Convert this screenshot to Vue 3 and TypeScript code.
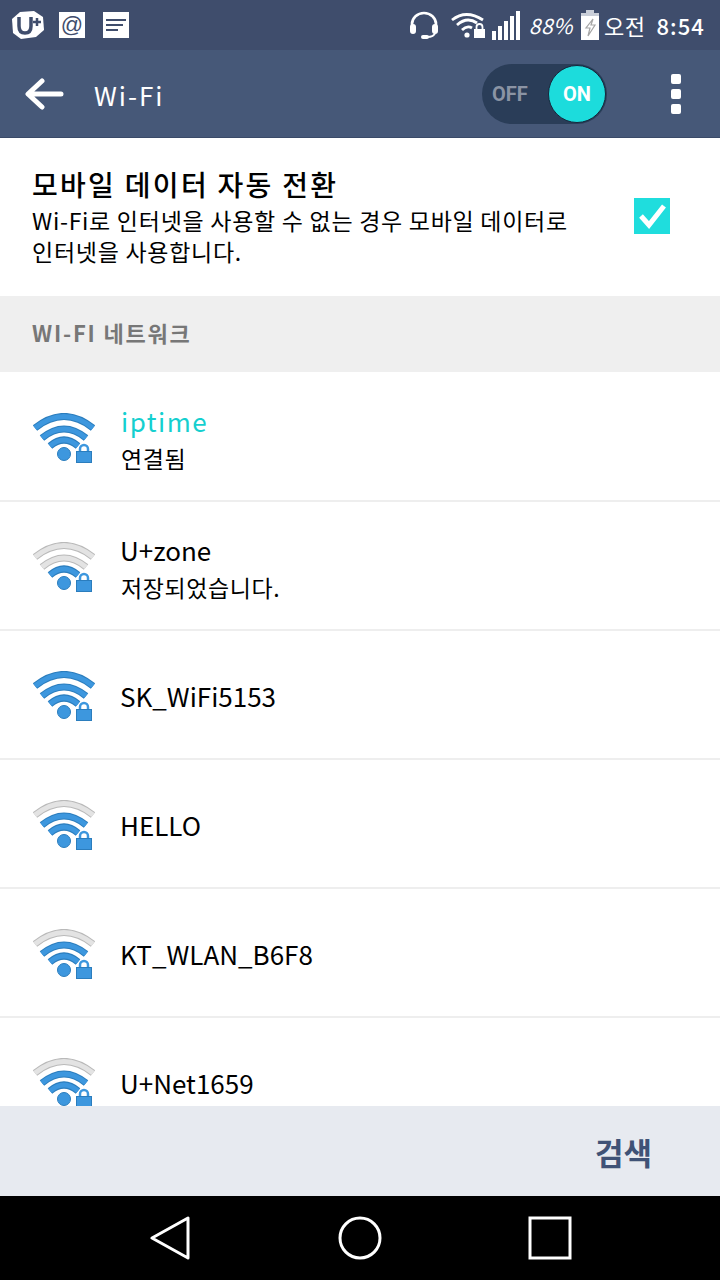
<script setup lang="ts">
interface Network {
  name: string
  sub?: string
  level: number
  active?: boolean
}

const networks: Network[] = [
  { name: 'iptime', sub: '연결됨', level: 3, active: true },
  { name: 'U+zone', sub: '저장되었습니다.', level: 1 },
  { name: 'SK_WiFi5153', level: 3 },
  { name: 'HELLO', level: 2 },
  { name: 'KT_WLAN_B6F8', level: 2 },
  { name: 'U+Net1659', level: 2 },
]
</script>

<template>
  <div class="phone">
    <header class="status">
      <svg class="s-logo" viewBox="0 0 32 28">
        <path d="M8 1 L22 0 L31 6 L32 19 L24 26 L9 28 L1 22 L0 8 Z" fill="#fff" />
        <path d="M7 6 V15 Q7 22 13 22 Q19 22 19 15 V6" fill="none" stroke="#3f4d6c" stroke-width="3.5" />
        <path d="M25 7 V15 M21 11 H29" stroke="#3f4d6c" stroke-width="2.5" />
      </svg>
      <div class="s-box s-at">@</div>
      <svg class="s-note" viewBox="0 0 26 26">
        <rect width="26" height="26" fill="#fff" />
        <path d="M3 8 H23 M3 13 H20 M3 18 H15" stroke="#3f4d6c" stroke-width="2" />
      </svg>
      <div class="spacer"></div>
      <svg class="s-head" viewBox="0 0 30 28">
        <path d="M3 17 V13 A12 11 0 0 1 27 13 V17" fill="none" stroke="#fff" stroke-width="2.6" />
        <rect x="1" y="13" width="6" height="10" rx="3" fill="#fff" />
        <rect x="23" y="13" width="6" height="10" rx="3" fill="#fff" />
        <path d="M26 22 Q25 26 18 26" fill="none" stroke="#fff" stroke-width="2" />
        <rect x="12" y="24" width="8" height="4" rx="2" fill="#fff" />
      </svg>
      <svg class="s-wifi" viewBox="0 0 34 26">
        <path d="M1 8 Q15 -3 32 8" fill="none" stroke="#fff" stroke-width="2.8" />
        <path d="M6 13 Q16 4 26 11" fill="none" stroke="#fff" stroke-width="2.8" />
        <path d="M11 18 Q16 13 21 16" fill="none" stroke="#fff" stroke-width="2.8" />
        <circle cx="16" cy="23" r="2.6" fill="#fff" />
        <rect x="23" y="17" width="11" height="9" fill="#fff" />
        <path d="M25.500 17 V15 A3 3 0 0 1 31.500 15 V17" fill="none" stroke="#fff" stroke-width="1.800" />
      </svg>
      <svg class="s-signal" viewBox="0 0 28 29">
        <rect x="0" y="20" width="4" height="9" fill="#fff" />
        <rect x="6" y="15" width="4" height="14" fill="#fff" />
        <rect x="12" y="10" width="4" height="19" fill="#fff" />
        <rect x="18" y="5" width="4" height="24" fill="#fff" />
        <rect x="24" y="0" width="4" height="29" fill="#fff" />
      </svg>
      <span class="s-pct">88%</span>
      <svg class="s-batt" viewBox="0 0 18 30">
        <rect x="5" y="0" width="8" height="3" fill="#c9ced8" />
        <rect x="0" y="3" width="18" height="27" fill="#fff" />
        <rect x="0" y="3" width="18" height="3" fill="#c9ced8" />
        <path d="M12 9 L5 18 H9 L7 26 L14 15 H10 Z" fill="none" stroke="#a5a5a5" stroke-width="1.200" />
      </svg>
      <span class="s-ampm">오전</span>
      <span class="s-time">8:54</span>
    </header>

    <div class="appbar">
      <svg class="back" viewBox="0 0 40 32">
        <path d="M37 16 H5 M18 3 L4 16 L18 29" fill="none" stroke="#fff" stroke-width="5" stroke-linecap="round" stroke-linejoin="round" />
      </svg>
      <h1 class="title">Wi-Fi</h1>
      <div class="toggle">
        <span class="off">OFF</span>
        <span class="knob">ON</span>
      </div>
      <div class="kebab"><i></i><i></i><i></i></div>
    </div>

    <section class="auto">
      <div class="auto-text">
        <div class="auto-title">모바일 데이터 자동 전환</div>
        <div class="auto-desc">Wi-Fi로 인터넷을 사용할 수 없는 경우 모바일 데이터로<br />인터넷을 사용합니다.</div>
      </div>
      <svg class="check" viewBox="0 0 36 36">
        <rect width="36" height="36" fill="#1fdddd" />
        <path d="M7 18 L15 27 L30 8" fill="none" stroke="#fff" stroke-width="5" />
      </svg>
    </section>

    <div class="section-head">WI-FI 네트워크</div>

    <main class="list">
      <div v-for="n in networks" :key="n.name" class="row">
        <svg class="wifi" viewBox="0 0 64 50">
          <path d="M3 15 Q32 -8 61 15" fill="none" :stroke="n.level >= 3 ? '#2b7dbd' : '#b9b9b9'" stroke-width="7" />
          <path d="M3 15 Q32 -8 61 15" fill="none" :stroke="n.level >= 3 ? '#3d97de' : '#e3e3e3'" stroke-width="5" />
          <path d="M10 25 Q32 7 54 25" fill="none" :stroke="n.level >= 2 ? '#2b7dbd' : '#b9b9b9'" stroke-width="7" />
          <path d="M10 25 Q32 7 54 25" fill="none" :stroke="n.level >= 2 ? '#3d97de' : '#e3e3e3'" stroke-width="5" />
          <path d="M18 33 Q32 21 46 33" fill="none" stroke="#2b7dbd" stroke-width="7" />
          <path d="M18 33 Q32 21 46 33" fill="none" stroke="#3d97de" stroke-width="5" />
          <circle cx="32" cy="41" r="6.500" fill="#3d97de" stroke="#2b7dbd" />
          <rect x="44.500" y="38.500" width="15" height="11" fill="#3d97de" stroke="#2b7dbd" />
          <path d="M48 38 V36 A4 4 0 0 1 56 36 V38" fill="none" stroke="#3d97de" stroke-width="2.500" />
        </svg>
        <div class="net" :class="{ two: n.sub }">
          <div class="net-name" :class="{ active: n.active }">{{ n.name }}</div>
          <div v-if="n.sub" class="net-sub">{{ n.sub }}</div>
        </div>
      </div>
    </main>

    <div class="bottom"><span class="search">검색</span></div>

    <nav class="nav">
      <svg viewBox="0 0 40 44" class="nav-icon">
        <path d="M38 2 V42 L2 22 Z" fill="none" stroke="#fff" stroke-width="3" stroke-linejoin="round" />
      </svg>
      <svg viewBox="0 0 44 44" class="nav-icon">
        <circle cx="22" cy="22" r="20" fill="none" stroke="#fff" stroke-width="3" />
      </svg>
      <svg viewBox="0 0 44 44" class="nav-icon">
        <rect x="2" y="2" width="40" height="40" fill="none" stroke="#fff" stroke-width="3" />
      </svg>
    </nav>
  </div>
</template>

<style scoped>
.phone {
  width: 720px;
  height: 1280px;
  display: flex;
  flex-direction: column;
  overflow: hidden;
  background: #fff;
  color: #000;
  font-family: "Noto Sans CJK KR", "Noto Sans", sans-serif;
}
.status {
  height: 50px;
  flex: none;
  display: flex;
  align-items: center;
  padding: 0 15px 0 12px;
  background: #3f4d6c;
  color: #fff;
}
.spacer { flex: 1; }
.s-logo { width: 32px; height: 28px; }
.s-box {
  width: 26px;
  height: 26px;
  margin-left: 15px;
  background: #fff;
  color: #3f4d6c;
  font: 22px/25px "Liberation Sans", sans-serif;
  text-align: center;
}
.s-note { width: 26px; height: 26px; margin-left: 18px; }
.s-head { width: 30px; height: 28px; }
.s-wifi { width: 34px; height: 26px; margin-left: 12px; }
.s-signal { width: 28px; height: 29px; margin-left: 7px; }
.s-pct {
  margin-left: 9px;
  font-size: 21px;
  font-style: italic;
  letter-spacing: 0.5px;
}
.s-batt { width: 18px; height: 30px; margin-left: 8px; }
.s-ampm { margin-left: 5px; font-size: 22px; letter-spacing: 0.5px; }
.s-time { margin-left: 11px; font-size: 22px; font-weight: 500; letter-spacing: 1.1px; }

.appbar {
  height: 87px;
  flex: none;
  display: flex;
  align-items: center;
  padding: 0 39px 0 24px;
  background: #465878;
  border-bottom: 1px solid #3a4a68;
  box-sizing: content-box;
}
.back { width: 40px; height: 32px; }
.title {
  margin: 1px 0 0 30px;
  flex: 1;
  font-size: 26px;
  font-weight: 400;
  letter-spacing: 2px;
  color: #fff;
}
.toggle {
  width: 125px;
  height: 60px;
  box-sizing: border-box;
  display: flex;
  align-items: center;
  justify-content: space-between;
  padding-left: 10px;
  border-radius: 30px;
  background: #2a3d58;
}
.off, .knob {
  font-family: Roboto, sans-serif;
  font-size: 20px;
  font-weight: 700;
}
.off { color: #8b94a4; }
.knob {
  width: 56px;
  height: 56px;
  margin-right: 1px;
  display: flex;
  align-items: center;
  justify-content: center;
  border-radius: 50%;
  border: 1px solid #16263c;
  background: #1cdcdc;
  color: #fff;
}
.kebab {
  margin-left: 64px;
  display: flex;
  flex-direction: column;
  gap: 5px;
}
.kebab i {
  display: block;
  width: 10px;
  height: 10px;
  border-radius: 2px;
  background: #fff;
}

.auto {
  height: 158px;
  flex: none;
  box-sizing: border-box;
  display: flex;
  align-items: center;
  justify-content: space-between;
  padding: 0 50px 0 32px;
}
.auto-title { margin-top: -1px; font-size: 28px; line-height: 36px; letter-spacing: 2.3px; font-weight: 500; }
.auto-desc { margin-top: 3px; font-size: 23px; line-height: 31px; letter-spacing: 0.72px; }
.check { width: 36px; height: 36px; margin-top: -3px; }

.section-head {
  height: 76px;
  flex: none;
  display: flex;
  align-items: center;
  padding: 0 32px 4px;
  box-sizing: border-box;
  background: #efefef;
  color: #777;
  font-size: 22px;
  font-weight: 700;
  letter-spacing: 1.8px;
}

.list {
  flex: 1;
  min-height: 0;
  overflow: hidden;
  padding-top: 1px;
}
.row {
  height: 129px;
  flex: none;
  box-sizing: border-box;
  display: flex;
  align-items: center;
  padding-top: 2px;
  padding-left: 32px;
  border-bottom: 2px solid #eeeeee;
}
.wifi { width: 64px; height: 50px; flex: none; }
.net { margin-left: 25px; }
.net.two { margin-top: 4px; }
.net-name { font-size: 26px; line-height: 36px; margin-left: -1px; }
.net-name.active { color: #15cfcf; letter-spacing: 1.5px; margin-left: 0; }
.net-sub { font-size: 23px; line-height: 36px; margin-top: 1px; letter-spacing: 0.6px; }

.bottom {
  height: 90px;
  flex: none;
  box-sizing: border-box;
  display: flex;
  align-items: center;
  justify-content: flex-end;
  padding-right: 68px;
  background: #e7eaf0;
}
.search { font-size: 31px; font-weight: 700; color: #3f5276; }

.nav {
  height: 84px;
  flex: none;
  box-sizing: border-box;
  display: flex;
  align-items: center;
  justify-content: center;
  gap: 146px;
  background: #000;
}
.nav-icon { width: 44px; height: 44px; }
</style>
